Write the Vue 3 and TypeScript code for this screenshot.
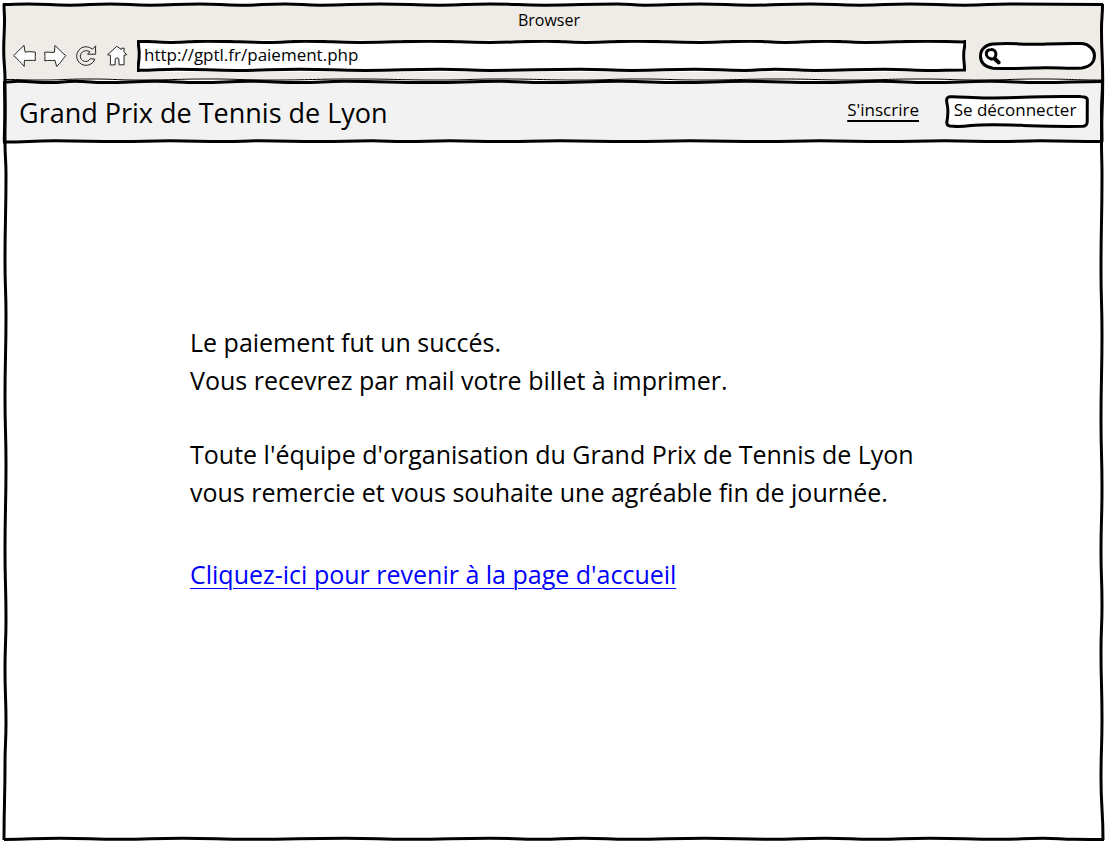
<script setup lang="ts">
import { ref } from 'vue'

type Point = [number, number]

const address = ref('http://gptl.fr/paiement.php')
const query = ref('')

// Smooth hand-drawn stroke through a list of points.
function stroke(points: Point[]): string {
  let d = `M${points[0][0]} ${points[0][1]}`
  for (let i = 1; i < points.length; i++) {
    const [px, py] = points[i - 1]
    const [x, y] = points[i]
    const mid = (px + x) / 2
    const midY = (py + y) / 2
    d += Math.abs(x - px) >= Math.abs(y - py)
      ? ` C${mid} ${py} ${mid} ${y} ${x} ${y}`
      : ` C${px} ${midY} ${x} ${midY} ${x} ${y}`
  }
  return d
}

// Alternates a list of positions between two levels.
function wave(positions: number[], a: number, b: number): Point[] {
  return positions.map((p, i) => [p, i % 2 === 0 ? a : b] as Point)
}

function flip(points: Point[]): Point[] {
  return points.map(([x, y]) => [y, x] as Point)
}

const frameTop = stroke([[3, 4.5], ...wave([28, 70, 110, 150, 200, 240, 285, 320, 380, 440, 490, 545, 617, 645, 700, 752, 810, 860, 910, 965, 1010], 4, 5.2), [1103, 4.5]])
const frameLeft = stroke([[4, 4], [4.5, 20], [3.7, 50], [5, 80], [5, 142], ...flip(wave([175, 261, 316, 397, 465, 551, 619, 669, 723, 764], 6, 5)), [4, 840]])
const frameRight = stroke([[1102.5, 4], [1101.5, 30], [1102.7, 80], [1101.5, 142], ...flip(wave([175, 270, 334, 420, 488, 551, 605, 651, 719, 778], 1102, 1101)), [1103, 840]])
const frameBottom = stroke([[4, 839.5], ...wave([60, 120, 182, 250, 345, 410, 490, 540, 583, 630, 705, 771, 825, 875, 930, 1000, 1043, 1075], 838.2, 839.3), [1104, 839.5]])

const chromeGap = stroke([[5, 80], [60, 80.5], [200, 80], [400, 80.5], [600, 80], [800, 80.5], [1100, 80]])
const chromeLine = stroke([[5, 79.5], ...wave([40, 90, 140, 210, 270, 355, 440, 500, 580, 640, 700, 780, 850, 920, 980, 1040], 80, 79), [1103, 80]])

const headerTop = stroke([[4, 82], ...wave([18, 50, 75, 105, 155, 200, 250, 300, 345, 430, 500, 545, 620, 680, 745, 820, 880, 930, 990, 1040], 81.3, 82.5), [1103, 81.5]])
const headerBottom = stroke([[3, 142], ...wave([55, 120, 170, 225, 260, 320, 372, 405, 450, 500, 560, 630, 690, 765, 820, 885, 945, 1000, 1040], 140.8, 141.6), [1103, 141.5]])
const headerSides = stroke([[4.5, 81], [5, 110], [4.3, 142]]) + ' ' + stroke([[1102.5, 81], [1101.5, 112], [1102, 142]])

const urlTop = wave([1, 34, 70, 135, 168, 223, 293, 353, 408, 448, 498, 563, 613, 648, 690, 728, 790], 1.2, 2.4)
const urlBottom = wave([790, 748, 678, 638, 608, 558, 495, 443, 353, 303, 228, 163, 100, 40], 30.4, 29.2)
const urlBox = stroke([[1.5, 2], ...urlTop, [828, 2]]) + ' ' + stroke([[828, 1], [826.7, 15], [827.5, 30]]) + ' ' + stroke([[828, 30], ...urlBottom, [1, 30.3]]) + ' ' + stroke([[1.3, 1], [2.2, 14], [1, 31]])
</script>

<template>
  <div class="window">
    <section class="chrome">
      <div class="caption">Browser</div>
      <form class="toolbar" @submit.prevent>
        <button type="button" class="tool" aria-label="Back">
          <svg viewBox="0 0 24 24"><path d="M.6 11.6 L11 1.3 C11.3 4 11.6 6 12.2 8.2 C15 7.4 19 7.6 22.4 8.2 C21.9 11 22.6 14 22.3 16.6 C19 15.8 15 16.8 11.4 16.3 L11.2 22.4 C8 18.4 4 14.6 .6 11.6Z" /></svg>
        </button>
        <button type="button" class="tool" aria-label="Forward">
          <svg viewBox="0 0 24 24"><path d="M.6 8.3 C4 7.7 7 8.8 10.4 8.2 L11 1.4 C14.6 5 18 8.8 21.8 11.6 C18.6 15 16.8 19 12.6 22.4 L11 16.4 C8 16.8 4 16 .8 16.8 C1.2 14 1 11 .6 8.3Z" /></svg>
        </button>
        <button type="button" class="tool hollow" aria-label="Reload">
          <svg viewBox="0 0 24 24"><path d="M19.8 15.2 C17.6 20.8 11.6 22.8 6.6 20.2 C.4 17 .2 8.6 5.2 4.8 C8.8 2 13.6 2.2 17.4 5.2 L20.7 1.8 C20.2 4.6 20.8 7.6 20.7 10.2 L12.6 10.2 L14.9 7.7 C11 5.2 5.4 7.6 5.3 12.2 C5.3 17.6 12.6 19.6 15.4 14.6 Z" /></svg>
        </button>
        <button type="button" class="tool" aria-label="Home">
          <svg viewBox="0 0 24 24"><path d="M10.8 2.3 C12.4 3.2 13.8 4.4 15.2 5.6 L15.5 4.2 L18.2 4.2 L17.9 7.8 L20.7 10.6 L18 11.2 C18.4 14.4 17.6 17.6 18.2 20.7 L13.2 20.9 L12.8 14.8 C12.2 13.6 9.6 13.6 9.2 15 L9.1 20.9 L4.2 20.9 C4.8 17.6 4.2 14.6 4.5 11.3 L1.5 10.7 C4.8 8 7.6 5.2 10.8 2.3Z" /></svg>
        </button>
        <div class="box address">
          <svg class="outline" viewBox="0 0 829 32" preserveAspectRatio="none" aria-hidden="true"><path :d="urlBox" /></svg>
          <input v-model="address" type="text" aria-label="Address" />
        </div>
        <div class="box search">
          <svg class="outline" viewBox="0 0 117 28" preserveAspectRatio="none" aria-hidden="true">
            <path d="M14 2 C30 .8 36 1.8 48 2.3 S80 1 103 1.6 C110 2 115.5 8 115.5 13.5 C115.5 20 111 25 103 26 C90 27 80 25.6 66 25.8 S40 27 14 26.2 C6 25 1.5 21 1.5 14 C1.5 7 7 2.4 14 2Z" />
          </svg>
          <svg class="lens" viewBox="0 0 18 18" aria-hidden="true">
            <path class="ring" d="M7 2.6 C10 2.2 12 4.4 11.9 7.4 C11.8 10.6 9.4 12.6 6.6 11.8 C4 11 1.8 8.4 2.4 5.6 C2.9 3.6 4.8 2.8 7 2.6Z" />
            <path class="grip" d="M11 12 L14.6 15.4" />
          </svg>
          <input v-model="query" type="text" aria-label="Search" />
        </div>
      </form>
    </section>

    <header class="site">
      <h1>Grand Prix de Tennis de Lyon</h1>
      <nav>
        <a href="#inscription">S'inscrire</a>
        <button type="button" class="box logout">
          <svg class="outline" viewBox="0 0 144 33" preserveAspectRatio="none" aria-hidden="true">
            <path d="M5 1.7 C16 1.3 27 3.2 45 3 S90 1.8 118 1.6 S132 1.8 139 2 Q142.3 2.4 142.3 5 L142.2 27 Q142 31 138 31.3 C110 31.8 95 31 78 30.4 S40 29 26 30.6 S12 31.4 5 31 Q1.8 30.6 1.8 27.5 C2.8 22 3.4 18 2.6 12 C2.2 9 1.6 8 1.6 5 Q1.8 2 5 1.7Z" />
          </svg>
          <span>Se déconnecter</span>
        </button>
      </nav>
    </header>

    <main>
      <div class="message">
        <p>Le paiement fut un succés.<br />Vous recevrez par mail votre billet à imprimer.</p>
        <p>Toute l'équipe d'organisation du Grand Prix de Tennis de Lyon<br />vous remercie et vous souhaite une agréable fin de journée.</p>
        <a href="#accueil">Cliquez-ici pour revenir à la page d'accueil</a>
      </div>
    </main>

    <svg class="frame" viewBox="0 0 1108 846" preserveAspectRatio="none" aria-hidden="true">
      <path class="gap" :d="chromeGap" />
      <path class="thin" :d="chromeLine" />
      <path :d="frameTop" />
      <path :d="frameLeft" />
      <path :d="frameRight" />
      <path :d="frameBottom" />
      <path :d="headerTop" />
      <path :d="headerBottom" />
      <path :d="headerSides" />
    </svg>
  </div>
</template>

<style>
body {
  margin: 0;
  background: #fff;
}
</style>

<style scoped>
.window {
  position: relative;
  box-sizing: border-box;
  display: flex;
  flex-direction: column;
  min-height: 100vh;
  padding: 4px 5px 6px;
  background: #fff;
  color: #000;
  font-family: "Open Sans", "Noto Sans", sans-serif;
  font-size: 17px;
}

input,
button {
  font: inherit;
  color: inherit;
  border: 0;
  padding: 0;
  background: none;
  outline: none;
}

.frame,
.outline {
  position: absolute;
  inset: 0;
  width: 100%;
  height: 100%;
  pointer-events: none;
}

.frame path,
.outline path {
  fill: none;
  stroke: #000;
  stroke-width: 3px;
  vector-effect: non-scaling-stroke;
}

.frame .gap {
  stroke: #fff;
  stroke-width: 2px;
}

.frame .thin {
  stroke-width: 1px;
}

.outline path {
  fill: #fff;
}

.chrome {
  background: #efebe6;
  height: 77px;
}

.caption {
  font-size: 16px;
  line-height: 32px;
  padding-right: 10px;
  text-align: center;
}

.toolbar {
  display: flex;
  align-items: center;
  gap: 7px;
  padding: 4px 7px 0 8px;
}

.tool {
  flex: none;
  width: 24px;
  height: 24px;
}

.tool svg {
  display: block;
  width: 24px;
  height: 24px;
  fill: #fff;
  stroke: #222;
  stroke-width: 1px;
  stroke-linejoin: round;
}

.hollow svg {
  fill: #efebe6;
}

.box {
  position: relative;
}

.box input,
.box span {
  position: relative;
}

.address {
  flex: 1;
  height: 32px;
  background: #fff;
}

.address .outline path {
  fill: none;
  stroke-linecap: round;
}

.address input {
  box-sizing: border-box;
  width: 100%;
  height: 28px;
  padding: 0 7px;
}

.search {
  flex: none;
  display: flex;
  align-items: center;
  width: 117px;
  height: 28px;
  margin-left: 6px;
  padding-left: 5px;
  box-sizing: border-box;
}

.search input {
  flex: 1;
  min-width: 0;
  padding: 0 8px 0 4px;
}

.lens {
  position: relative;
  flex: none;
  width: 18px;
  height: 18px;
  fill: none;
  stroke: #000;
  stroke-linecap: round;
}

.ring {
  stroke-width: 3px;
}

.grip {
  stroke-width: 4px;
}

.site {
  display: flex;
  align-items: center;
  justify-content: space-between;
  height: 60px;
  padding: 0 14px;
  background: #f2f2f2;
}

h1 {
  margin: 0;
  padding-top: 4px;
  font-size: 27px;
  font-weight: 400;
  line-height: 56px;
}

nav {
  display: flex;
  align-items: center;
  gap: 26px;
}

nav a {
  padding-bottom: 4px;
  color: inherit;
  text-underline-offset: 4px;
  text-decoration-thickness: 2px;
}

.logout {
  width: 144px;
  height: 33px;
  padding: 0 4px 4px 0;
}

main {
  flex: 1;
  padding-top: 182px;
}

.message {
  max-width: 728px;
  margin: 0 auto;
  font-size: 25px;
  line-height: 38px;
}

.message p {
  margin: 0 0 36px;
}

.message a {
  display: inline-block;
  margin-top: 8px;
  color: #00f;
  text-decoration-thickness: 1px;
  text-underline-offset: 4px;
}
</style>
